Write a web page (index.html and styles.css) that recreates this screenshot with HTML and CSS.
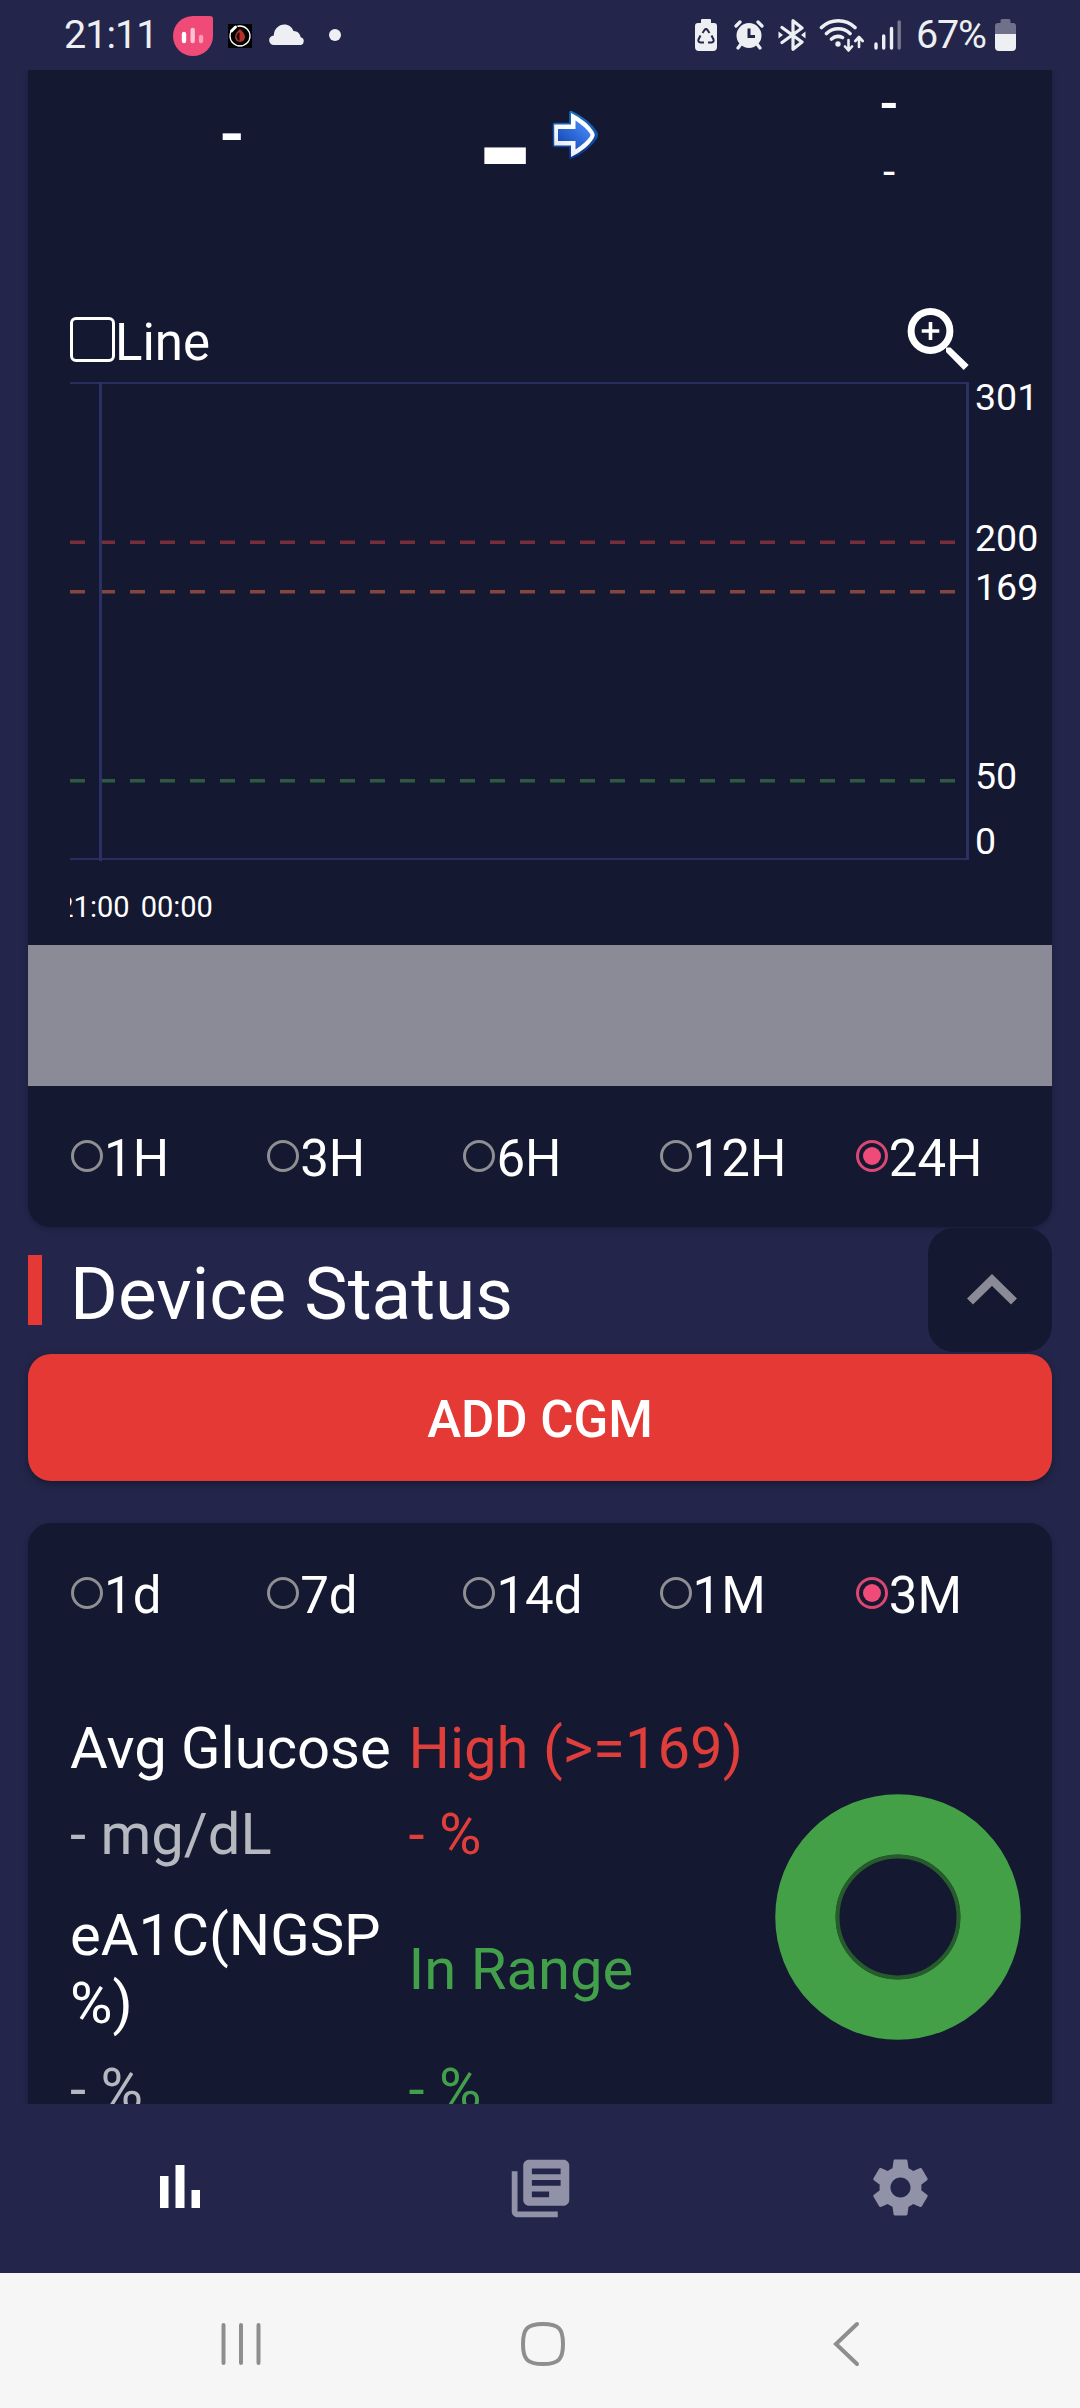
FILE: index.html
```html
<!DOCTYPE html>
<html lang="en">
<head>
<meta charset="utf-8">
<title>Glucose Monitor</title>
<link rel="stylesheet" href="styles.css">
</head>
<body>
<div class="phone">
  <header class="status">
    <span class="clock">21:11</span>
    <svg class="s-app" width="40" height="40" viewBox="0 0 40 40"><path d="M20 0h17q3 0 3 3v17a20 20 0 1 1-20-20z" fill="#f04a78"/><g stroke-linecap="round" stroke-width="4.400"><path d="M11 18v7" stroke="#fff"/><path d="M19.700 14v11" stroke="#fdc3d3"/><path d="M28 21v4" stroke="#fb9fb9"/></g></svg>
    <svg class="s-drop" width="24" height="24" viewBox="0 0 24 24"><path d="M0 0h24v24H0z" fill="#000"/><circle cx="12" cy="12" r="10" fill="none" stroke="#fff" stroke-width="1.300"/><path d="M3 8l6-6" stroke="#000" stroke-width="5"/><path d="M3.500 7l4-4" stroke="#fff" stroke-width="3" stroke-linecap="round"/><path d="M12 5c3 3 5 5 5 8a5 5 0 0 1-10 0c0-3 2-5 5-8z" fill="#b5302b"/><path d="M11.500 8v9c-2-1-3-3-3-4.500s1-3 3-4.500z" fill="#1a0505"/></svg>
    <svg class="s-cloud" width="36" height="21" viewBox="0 0 36 21"><path d="M5 21a4.800 4.800 0 0 1-.2-9.600C5 4.500 10 .4 15.200.4c4.500 0 7.800 2.500 9.300 6.600 4 .1 6.600 2.600 7.200 6.300A4 4 0 0 1 32 21z" fill="#eeeff3"/></svg>
    <span class="s-dot"></span>
    <div class="status-right">
      <svg class="s-recycle" width="22" height="32" viewBox="0 0 22 32"><path d="M7 0h8q1 0 1 1v3h3q3 0 3 3v21q0 4-4 4H4q-4 0-4-4V7q0-3 3-3h3V1q0-1 1-1z" fill="#eeeff3"/><g fill="none" stroke="#23264a" stroke-width="2"><path d="M7.500 14l2-3q1.500-1.800 3 0l2 3M5.500 16.500l-2 4q-.8 2.500 2 3h3.500M16.500 16.500l2 4q.8 2.500-2 3H13"/></g></svg>
      <svg class="s-alarm" width="30" height="30" viewBox="0 0 30 30"><circle cx="15" cy="15.500" r="12.500" fill="#eeeff3"/><g stroke="#eeeff3" stroke-width="3.200" stroke-linecap="round"><path d="M2 6l4-4M28 6l-4-4M7 24l-3 4M23 24l3 4"/></g><path d="M15 8.500v8h6" fill="none" stroke="#23264a" stroke-width="3"/></svg>
      <svg class="s-bt" width="28" height="32" viewBox="0 0 28 32"><g fill="none" stroke="#eeeff3" stroke-width="3.200" stroke-linejoin="round" stroke-linecap="round"><path d="M4 8.500l20 14.500-9 7.300V1.700L24 9 4 23.500"/></g><path d="M0.500 12.500l4.500 3.500-4.500 3.500zM27.500 12.500L23 16l4.500 3.500z" fill="#eeeff3"/></svg>
      <svg class="s-wifi" width="46" height="34" viewBox="0 0 46 34"><g fill="none" stroke="#eeeff3" stroke-width="3.600" stroke-linecap="round"><path d="M2.500 9.500a24 24 0 0 1 33.500 0M7.500 15.500a17 17 0 0 1 23.500 0M12.500 21a10 10 0 0 1 11-1.500"/></g><circle cx="19" cy="26" r="2.700" fill="#eeeff3"/><g fill="none" stroke="#eeeff3" stroke-width="2.600" stroke-linecap="round" stroke-linejoin="round"><path d="M29.500 22v10M26 28.500l3.500 4 3.500-4M40 29V19.500M36.300 23l3.700-4 3.700 4"/></g></svg>
      <svg class="s-signal" width="28" height="30" viewBox="0 0 28 30"><g stroke="#eeeff3" stroke-width="3.400" stroke-linecap="round"><path d="M2 24v4M9.700 16v12M17.500 8.500V28"/><path d="M25.200 2v26" stroke="#77788e"/></g></svg>
      <span class="percent">67%</span>
      <svg class="s-batt" width="21" height="32" viewBox="0 0 21 32"><path d="M7 0h7q1.500 0 1.500 1.500V4H18q3 0 3 3v8H0V7q0-3 3-3h2.500V1.500Q5.500 0 7 0z" fill="#6f708a"/><path d="M0 15h21v13q0 4-4 4H4q-4 0-4-4z" fill="#eeeff3"/></svg>
    </div>
  </header>

  <main class="screen">
    <section class="card chart-card">
      <div class="readings">
        <span class="r-left">-</span>
        <div class="r-mid">
          <span class="r-value">-</span>
          <svg class="r-arrow" width="48" height="52" viewBox="0 0 48 52">
            <defs><linearGradient id="ab" x1="0" y1="1" x2="1" y2="0"><stop offset="0" stop-color="#0f3fae"/><stop offset="1" stop-color="#4c93ff"/></linearGradient><linearGradient id="ol" x1="0" y1="0" x2="0" y2="1"><stop offset="0" stop-color="#1770c0"/><stop offset="1" stop-color="#0c348c"/></linearGradient><linearGradient id="wh" x1="0" y1="1" x2="1" y2="0"><stop offset="0" stop-color="#d9dff0"/><stop offset=".5" stop-color="#fff"/></linearGradient></defs>
            <g stroke-linejoin="round"><path d="M3.500 15.500H20V3.500C30 8 40 16 44.500 23.500q1.500 2.500 0 5C40 36 30 44 20 48.500V36.500H3.500z" fill="url(#ol)" stroke="url(#ol)" stroke-width="3.500"/></g>
            <path d="M3.200 15.500H20V4C30 9 39 16 43 23.500q1.500 2.500 0 5C39 36 30 43 20 48V36.500H3.200z" fill="url(#wh)"/>
            <path d="M7 20h17.500v-8.500C31 16 36 20 39 24.500q1 1.500 0 3C36 32 31 36 24.500 40.500V32H7z" fill="url(#ab)"/>
          </svg>
        </div>
        <div class="r-right"><span class="r-delta">-</span><span class="r-time">-</span></div>
      </div>
      <div class="toolbar">
        <span class="checkbox"></span><span class="line-label">Line</span>
        <svg class="zoom" width="64" height="64" viewBox="0 0 64 64"><circle cx="23.500" cy="24" r="19.400" fill="none" stroke="#fff" stroke-width="7"/><path d="M23.500 15v18M14.700 24h17.600" stroke="#fff" stroke-width="3.600"/><path d="M39 40.500h4.500L61.700 58l-5 5L39 45z" fill="#fff"/></svg>
      </div>
      <svg class="chart" width="1024" height="563" viewBox="28 382 1024 563">
        <clipPath id="plot"><rect x="70" y="382" width="900" height="563"/></clipPath>
        <g fill="none" stroke-width="3.500" stroke-dasharray="15 15">
          <path d="M70 542.200h897" stroke="#772e3b"/>
          <path d="M70 591.700h897" stroke="#84473f"/>
          <path d="M70 780.700h897" stroke="#2f5a41"/>
        </g>
        <path d="M70 383h897M70 859h897" stroke="#282e5d" stroke-width="2"/>
        <path d="M100.500 382v479M967.500 382v478" stroke="#2b3263" stroke-width="3"/>
        <g class="y-labels"><text x="975" y="410">301</text><text x="975" y="551">200</text><text x="975" y="600">169</text><text x="975" y="789">50</text><text x="975" y="854">0</text></g>
        <g class="x-labels" clip-path="url(#plot)"><text x="57.300" y="917">21:00</text><text x="140.700" y="917">00:00</text></g>
      </svg>
      <div class="band"></div>
      <div class="radios">
        <label class="radio"><i></i>1H</label><label class="radio"><i></i>3H</label><label class="radio"><i></i>6H</label><label class="radio"><i></i>12H</label><label class="radio on"><i></i>24H</label>
      </div>
    </section>

    <div class="section-head">
      <span class="accent"></span>
      <h2>Device Status</h2>
      <div class="collapse"><svg width="54" height="34" viewBox="0 0 54 34"><path d="M5 28.500L27 7l22 21.500" fill="none" stroke="#8a8b97" stroke-width="8.500"/></svg></div>
    </div>

    <button class="add">ADD CGM</button>

    <section class="card stats-card">
      <div class="radios">
        <label class="radio"><i></i>1d</label><label class="radio"><i></i>7d</label><label class="radio"><i></i>14d</label><label class="radio"><i></i>1M</label><label class="radio on"><i></i>3M</label>
      </div>
      <div class="stats">
        <div class="stats-grid">
          <span>Avg Glucose</span><span class="high head">High (&gt;=169)</span>
          <span class="muted val">- mg/dL</span><span class="high val">- %</span>
          <span>eA1C(NGSP<br>%)</span><span class="range head">In Range</span>
          <span class="muted val">- %</span><span class="range val">- %</span>
        </div>
        <svg class="donut" width="246" height="246" viewBox="0 0 246 246"><circle cx="123" cy="123" r="92.500" fill="none" stroke="#43a047" stroke-width="60.500"/><circle cx="123" cy="123" r="60.500" fill="none" stroke="#265b2b" stroke-width="4"/></svg>
      </div>
    </section>
  </main>

  <nav class="tabs">
    <div><svg width="66" height="66" viewBox="0 0 66 66"><path d="M13 22h8.500v32H13zM28.500 11h9v43h-9zM44.500 36H53v18h-8.500z" fill="#fff"/></svg></div>
    <div><svg width="69" height="69" viewBox="0 0 24 24"><path d="M4 6H2v14c0 1.100.9 2 2 2h14v-2H4V6zm16-4H8c-1.100 0-2 .9-2 2v12c0 1.100.9 2 2 2h12c1.100 0 2-.9 2-2V4c0-1.100-.9-2-2-2zm-1 9H9V9h10v2zm-4 4H9v-2h6v2zm4-8H9V5h10v2z" fill="#9192a7"/></svg></div>
    <div><svg width="67" height="67" viewBox="0 0 24 24"><path d="M19.430 12.980c.04-.32.07-.64.07-.98s-.03-.66-.07-.98l2.110-1.650c.19-.15.24-.42.12-.64l-2-3.460c-.12-.22-.39-.3-.61-.22l-2.490 1c-.52-.4-1.080-.73-1.690-.98l-.38-2.650C14.460 2.180 14.250 2 14 2h-4c-.25 0-.46.18-.49.42l-.38 2.650c-.61.25-1.170.59-1.690.98l-2.490-1c-.23-.09-.49 0-.61.22l-2 3.460c-.13.22-.07.49.12.64l2.110 1.650c-.04.32-.07.65-.07.98s.03.66.07.98l-2.110 1.650c-.19.15-.24.42-.12.64l2 3.460c.12.22.39.3.61.22l2.490-1c.52.4 1.080.73 1.690.98l.38 2.650c.03.24.24.42.49.42h4c.25 0 .46-.18.49-.42l.38-2.650c.61-.25 1.170-.59 1.690-.98l2.490 1c.23.09.49 0 .61-.22l2-3.460c.12-.22.07-.49-.12-.64l-2.110-1.650zM12 15.600c-1.980 0-3.600-1.620-3.600-3.600s1.620-3.600 3.600-3.600 3.600 1.620 3.600 3.600-1.620 3.600-3.600 3.600z" fill="#9192a7"/></svg></div>
  </nav>

  <footer class="sysnav">
    <svg class="recents" width="42" height="46" viewBox="0 0 42 46"><path d="M3.500 4v38M21 4v38M38.500 4v38" stroke="#8e8e8e" stroke-width="4" stroke-linecap="round"/></svg>
    <svg class="home" width="46" height="46" viewBox="0 0 46 46"><path d="M23 3c15.500 0 20 4.500 20 20s-4.500 20-20 20S3 38.500 3 23 7.500 3 23 3z" fill="none" stroke="#8e8e8e" stroke-width="4"/></svg>
    <svg class="back" width="28" height="46" viewBox="0 0 28 46"><path d="M25 3L4 23l21 20" fill="none" stroke="#8e8e8e" stroke-width="4" stroke-linecap="round"/></svg>
  </footer>
</div>
</body>
</html>
```
FILE: styles.css
```css
* { box-sizing: border-box; }
body { margin: 0; font-family: Roboto, sans-serif; color: #fff; background: #23264a; }
svg { display: block; flex: none; }
.phone { width: 1080px; height: 2408px; display: flex; flex-direction: column; background: #23264a; overflow: hidden; }

/* status bar */
.status { height: 70px; flex: none; display: flex; align-items: flex-start; padding-left: 64px; color: #eeeff3; font-size: 39.500px; line-height: 46px; }
.clock { width: 109px; margin-top: 11.500px; letter-spacing: -1px; }
.s-app { margin-top: 16px; }
.s-drop { margin: 24px 0 0 15px; }
.s-cloud { margin: 24px 0 0 17px; }
.s-dot { width: 12px; height: 12px; border-radius: 50%; background: #eeeff3; margin: 29px 0 0 24px; }
.status-right { margin-left: auto; margin-right: 64px; display: flex; }
.s-recycle { margin: 19px 17px 0 0; }
.s-alarm { margin: 20px 14px 0 0; }
.s-bt { margin: 19px 13px 0 0; }
.s-wifi { margin: 18px 9px 0 0; }
.s-signal { margin-top: 20px; }
.percent { width: 93px; padding-left: 14px; margin-top: 11.500px; letter-spacing: -1.200px; }
.s-batt { margin-top: 19px; }

/* scrolled content */
.screen { height: 2034px; flex: none; padding: 0 28px; overflow: hidden; }
.card { background: #141830; box-shadow: 0 2px 5px rgba(10, 14, 30, .35); }
.chart-card { height: 1157px; border-radius: 0 0 23px 23px; }

.readings { height: 230px; display: grid; grid-template-columns: 408px 290px 326px; }
.r-left { text-align: center; font-size: 70px; line-height: 82px; margin-top: 23px; font-weight: 500; }
.r-mid { display: flex; }
.r-value { font-size: 150px; line-height: 176px; font-weight: 700; margin: -7.500px 0 0 40px; width: 75px; }
.r-arrow { margin-top: 39px; }
.r-right { display: flex; flex-direction: column; align-items: center; }
.r-delta { font-size: 54px; line-height: 64px; margin-top: 1.500px; font-weight: 500; }
.r-time { font-size: 44px; line-height: 52px; margin-top: 10.500px; }

.toolbar { height: 82px; display: flex; align-items: flex-start; padding-left: 42px; font-size: 51px; line-height: 60px; }
.checkbox { width: 45px; height: 45px; border: 3px solid #fff; border-radius: 6px; margin-top: 17px; }
.line-label { margin-top: 12.500px; }
.zoom { margin: 7px 81px 0 auto; }
.chart { overflow: visible; }
.y-labels, .x-labels { fill: #fff; font-size: 37.500px; }
.x-labels { font-size: 29px; }
.band { height: 141px; background: #8a8b97; }

.radios { height: 141px; display: flex; padding: 42.600px 0 0 43px; }
.radio { width: 196.200px; flex: none; display: flex; align-items: flex-start; font-size: 51px; line-height: 60px; }
.radio i { width: 32px; height: 32px; border: 3px solid #8e8e93; border-radius: 50%; margin: 11.500px 1px 0 0; flex: none; display: grid; place-items: center; }
.radio.on i { border-color: #d84873; }
.radio.on i::after { content: ""; width: 18px; height: 18px; border-radius: 50%; background: #f04a78; }

.section-head { height: 127px; display: flex; align-items: flex-start; }
.accent { width: 14px; height: 70px; background: #e53935; margin-top: 28px; }
h2 { margin: 25px auto 0 28px; font-size: 73px; line-height: 84px; font-weight: 400; }
.collapse { width: 124px; height: 124px; margin-top: 1px; border-radius: 26px; background: #141830; display: grid; place-items: center; padding: 0 0 0 3px; }

.add { display: block; width: 1024px; height: 127px; border: 0; border-radius: 23px; background: #e53935; color: #fff; font: 500 51px/60px Roboto, sans-serif; box-shadow: 0 3px 7px rgba(10, 14, 30, .5); padding: 4px 0 0; }

.stats-card { margin-top: 42px; height: 700px; border-radius: 23px 23px 0 0; }
.stats-card .radios { height: 191px; }
.stats { display: flex; align-items: flex-start; padding-left: 42px; font-size: 58px; line-height: 68px; }
.stats-grid { width: 704.500px; display: grid; grid-template-columns: 338.500px auto; align-items: center; }
.stats-grid span { white-space: nowrap; }
.val { margin: 18px 0 33px; }
.muted { color: #b6b8c0; }
.high { color: #df3e3b; }
.range { color: #43a04a; }
.donut { margin-top: 80px; }

/* app tabs */
.tabs { height: 169px; flex: none; display: grid; grid-template-columns: repeat(3, 360px); justify-items: center; padding-top: 50px; }

/* system navigation */
.sysnav { height: 135px; flex: none; background: #f6f6f6; display: flex; padding: 48px 0 0 220px; }
.home { margin-left: 258px; }
.back { margin-left: 266px; }
```
